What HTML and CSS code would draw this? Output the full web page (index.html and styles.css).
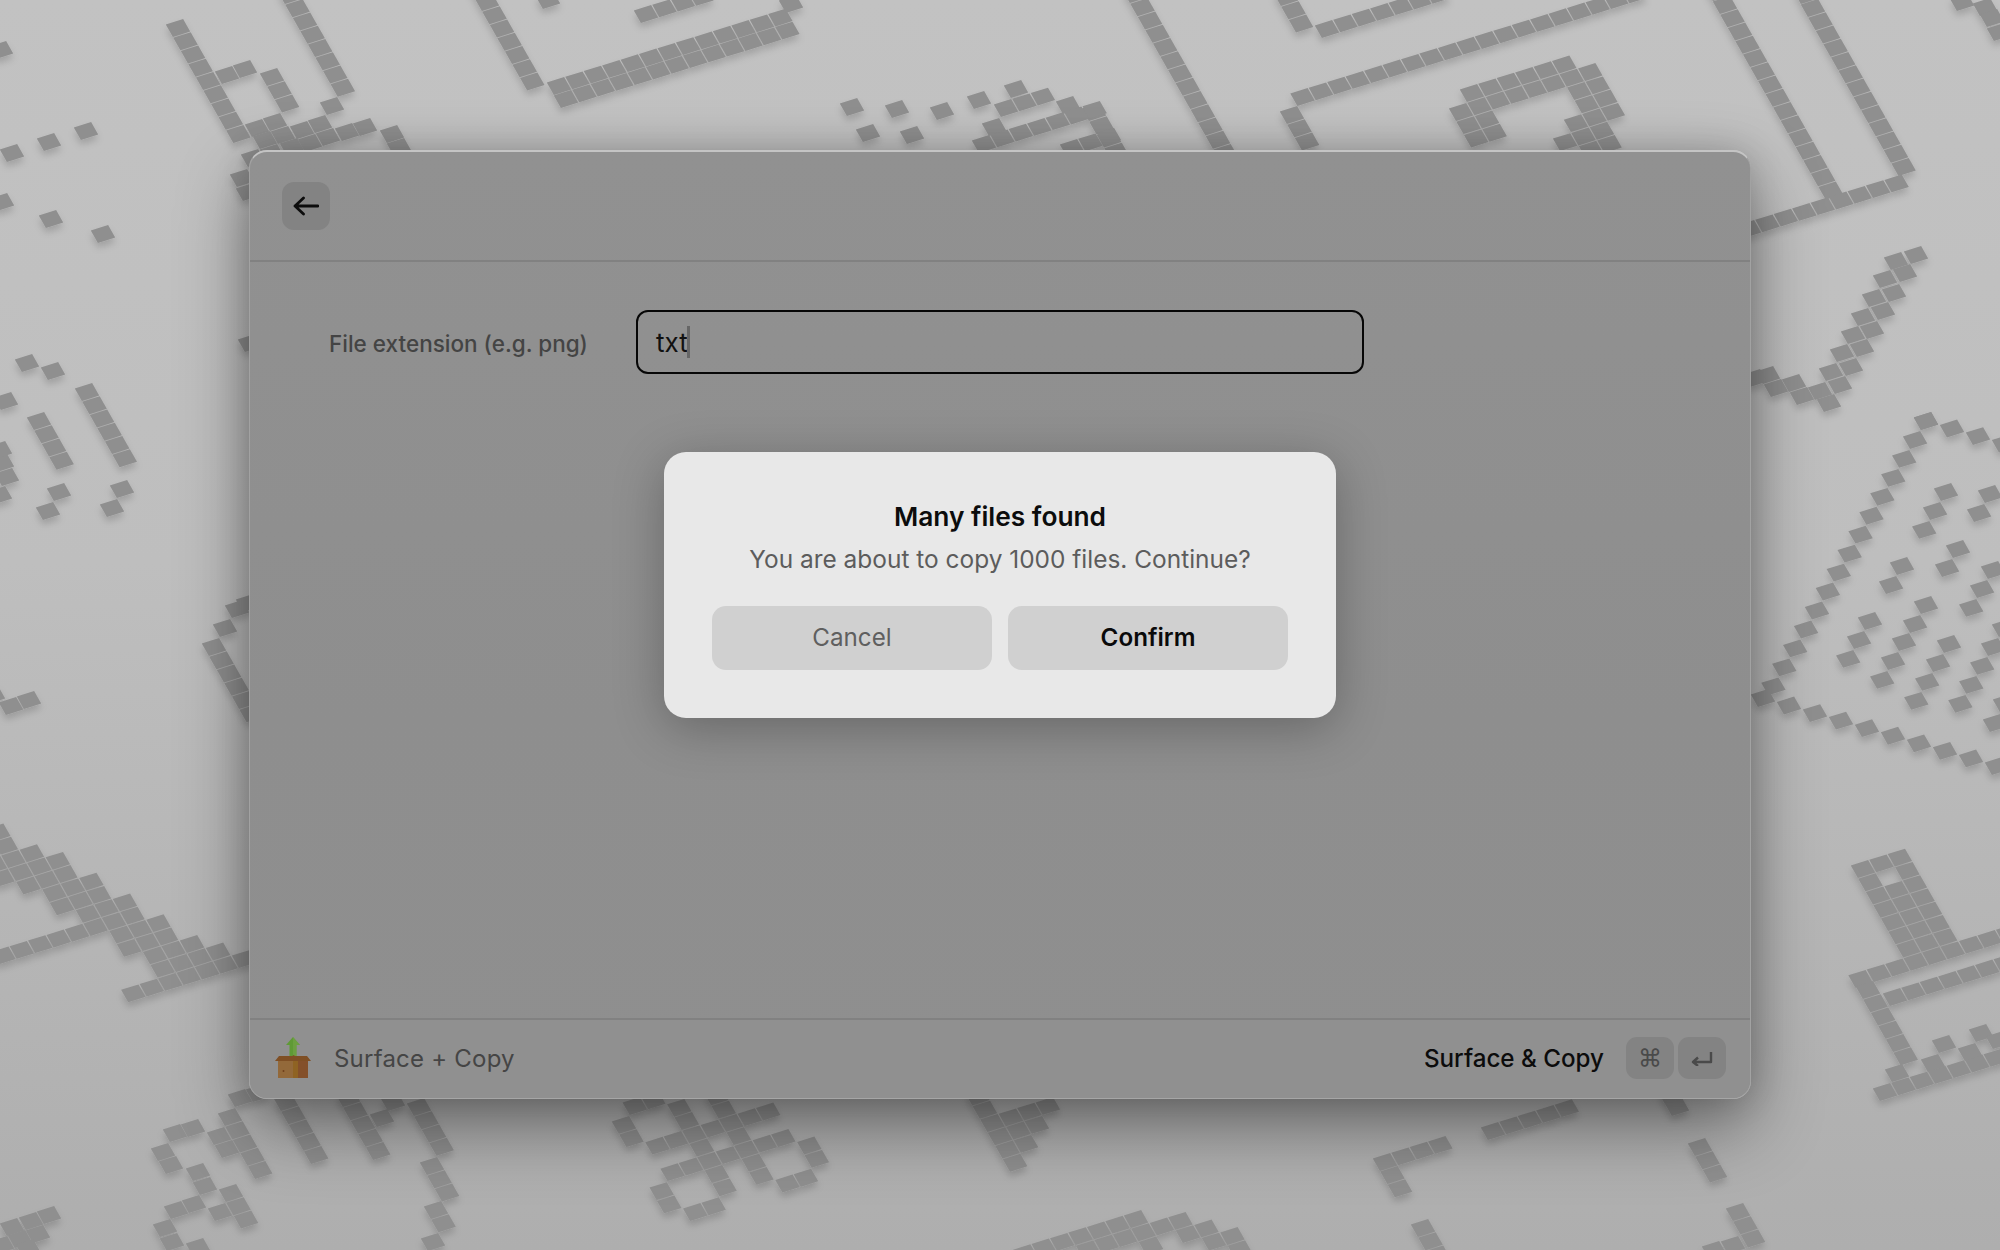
FILE: index.html
```html
<!DOCTYPE html>
<html lang="en">
<head>
<meta charset="utf-8">
<title>Surface + Copy</title>
<link rel="stylesheet" href="styles.css">
</head>
<body>
<div class="stage">
  <svg class="wallpaper" width="2000" height="1250" viewBox="0 0 2000 1250" aria-hidden="true">
    <defs>
      <filter id="lift" x="-5%" y="-5%" width="110%" height="110%">
        <feDropShadow dx="0" dy="5" stdDeviation="3.5" flood-color="#000" flood-opacity="0.16"/>
      </filter>
    </defs>
    <g id="cells" class="cells" filter="url(#lift)"></g>
  </svg>

  <main class="window">
    <header class="window-head">
      <button class="icon-btn" type="button" aria-label="Back">
        <svg width="26" height="20" viewBox="0 0 26 20" class="back-icon"><path d="M25 10H2M10.5 2 2 10l8.500 8"/></svg>
      </button>
    </header>

    <section class="form">
      <label class="form-label">File extension (e.g. png)</label>
      <div class="text-field"><span class="field-value">txt</span><span class="caret"></span></div>
    </section>

    <footer class="window-foot">
      <div class="foot-left">
        <svg class="app-icon" width="38" height="42" viewBox="0 0 38 42" aria-hidden="true">
          <path d="M19 0l7 8h-3.500v13h-7V8H12z" fill="#5f9a35"/>
          <path d="M22.500 8v13H19V0l7 8z" fill="#74a548" opacity=".6"/>
          <path d="M4 21h15v20H4z" fill="#93693a"/>
          <path d="M19 21h5v20h-5z" fill="#8f6323"/>
          <path d="M24 21h10v20H24z" fill="#84502a"/>
          <path d="M5 19h13.500l1 -1 1.500 1H33l4 5H1z" fill="#7f4f24"/>
          <circle cx="9.500" cy="34" r="1" fill="#6f3f1c"/>
        </svg>
        <span class="foot-title">Surface + Copy</span>
      </div>
      <div class="foot-right">
        <span class="foot-action">Surface &amp; Copy</span>
        <span class="keycap">⌘</span>
        <span class="keycap">
          <svg width="22" height="16" viewBox="0 0 22 16" class="return-icon"><path d="M20 2v10H2M7 7.500 2 12l5 4"/></svg>
        </span>
      </div>
    </footer>

    <div class="dialog" role="dialog">
      <h2 class="dialog-title">Many files found</h2>
      <p class="dialog-text">You are about to copy 1000 files. Continue?</p>
      <div class="dialog-actions">
        <button class="dialog-btn" type="button">Cancel</button>
        <button class="dialog-btn dialog-btn-primary" type="button">Confirm</button>
      </div>
    </div>
  </main>
</div>
<script src="wallpaper.js"></script>
</body>
</html>
```
FILE: styles.css
```css
* { box-sizing: border-box; }

html, body { margin: 0; padding: 0; }

body {
  font-family: Inter, "Liberation Sans", sans-serif;
  background: #bdbdbd;
}

.stage {
  position: relative;
  width: 2000px;
  height: 1250px;
  overflow: hidden;
  display: flex;
  justify-content: center;
  align-items: flex-start;
  padding-top: 150px;
  background: linear-gradient(180deg, #c2c2c2 0%, #bebebe 45%, #aeaeae 100%);
}

.wallpaper {
  position: absolute;
  left: 0;
  top: 0;
}

.cells polygon { fill: #8f8f8f; }

.window {
  position: relative;
  width: 1502px;
  height: 949px;
  display: flex;
  flex-direction: column;
  border-radius: 18px;
  background: linear-gradient(180deg, #919191 0%, #8e8e8e 60%, #8f8f8f 100%);
  border: 1px solid #a2a2a2;
  border-top: 2px solid #c4c4c4;
  border-bottom-color: #a6a6a6;
  box-shadow: 0 28px 70px rgba(0, 0, 0, .42), 0 0 34px rgba(0, 0, 0, .16);
}

.window-head {
  height: 110px;
  flex: none;
  padding: 30px 0 0 32px;
  border-bottom: 2px solid #818181;
}

.icon-btn {
  width: 48px;
  height: 48px;
  display: flex;
  align-items: center;
  justify-content: center;
  padding: 0;
  border: 0;
  border-radius: 12px;
  background: #838383;
}

.back-icon path {
  fill: none;
  stroke: #0c0c0c;
  stroke-width: 2.8;
  stroke-linecap: round;
  stroke-linejoin: round;
}

.form {
  flex: 1;
  display: flex;
  align-items: flex-start;
  padding: 48px 0 0 79px;
}

.form-label {
  width: 307px;
  flex: none;
  padding-top: 20px;
  font-size: 22.500px;
  line-height: 28px;
  font-weight: 500;
  color: #444;
}

.text-field {
  width: 728px;
  height: 64px;
  display: flex;
  align-items: center;
  padding-left: 18px;
  border: 2px solid #070707;
  border-radius: 12px;
  font-size: 26px;
  color: #111;
}

.caret {
  width: 3px;
  height: 32px;
  margin-left: -1px;
  background: #666;
}

.window-foot {
  height: 80px;
  flex: none;
  display: flex;
  align-items: center;
  justify-content: space-between;
  padding: 0 24px 1px 24px;
  border-top: 2px solid #818181;
  background: #909090;
  border-radius: 0 0 17px 17px;
}

.foot-left,
.foot-right {
  display: flex;
  align-items: center;
}

.app-icon { margin-right: 22px; margin-top: -1px; }

.foot-title {
  font-size: 24px;
  letter-spacing: .22px;
  color: #454545;
}

.foot-action {
  margin-right: 22px;
  font-size: 24.200px;
  font-weight: 500;
  color: #0c0c0c;
}

.keycap {
  width: 48px;
  height: 42px;
  display: flex;
  align-items: center;
  justify-content: center;
  margin-left: 4px;
  margin-bottom: 2px;
  border-radius: 11px;
  background: #838383;
  font-size: 24px;
  color: #4a4a4a;
}

.foot-action + .keycap { margin-left: 0; }

.return-icon path {
  fill: none;
  stroke: #4a4a4a;
  stroke-width: 2.4;
  stroke-linejoin: round;
}

.dialog {
  position: absolute;
  left: 414px;
  top: 300px;
  width: 672px;
  height: 266px;
  padding: 47px 48px 0;
  border-radius: 22px;
  background: #e8e8e8;
  text-align: center;
  box-shadow: 0 10px 50px rgba(0, 0, 0, .28);
}

.dialog-title {
  margin: 0;
  font-size: 26.300px;
  line-height: 36px;
  font-weight: 600;
  color: #0c0c0c;
}

.dialog-text {
  margin: 6px 0 0;
  font-size: 24.450px;
  line-height: 36px;
  color: #5c5c5c;
}

.dialog-actions {
  display: flex;
  gap: 16px;
  margin-top: 29px;
}

.dialog-btn {
  width: 280px;
  height: 64px;
  padding: 0 0 2px;
  border: 0;
  border-radius: 14px;
  background: #d0d0d0;
  font-family: inherit;
  font-size: 24.200px;
  color: #5f5f5f;
}

.dialog-btn-primary {
  font-weight: 600;
  color: #0a0a0a;
}
```
FILE: wallpaper.js
```js
// Pixel-art wallpaper on a skewed lattice.
const U = [18.45, -5.7], V = [7.55, 13.25];
const D = [V[0] - U[0], V[1] - U[1]], S = [V[0] + U[0], V[1] + U[1]];
const host = document.getElementById('cells');
const K = 0.47;

function cell(x, y) {
  const p = document.createElementNS('http://www.w3.org/2000/svg', 'polygon');
  const a = (sx, sy) => (x + sx * K * U[0] + sy * K * V[0]).toFixed(1) + ',' + (y + sx * K * U[1] + sy * K * V[1]).toFixed(1);
  p.setAttribute('points', [a(-1, -1), a(1, -1), a(1, 1), a(-1, 1)].join(' '));
  host.appendChild(p);
}
function run(x, y, dir, n) {
  for (let k = 0; k < n; k++) cell(x + dir[0] * k, y + dir[1] * k);
}
function dots(list) { list.forEach(p => cell(p[0], p[1])); }
function block(x, y, rows) {
  rows.forEach(([j, a, b]) => {
    for (let i = a; i <= b; i++) cell(x + i * U[0] + j * V[0], y + i * U[1] + j * V[1]);
  });
}

// top left
dots([[1,50],[12,153],[49,142],[86,131],[2,202],[51,219],[103,234]]);
run(178,28,V,9);
dots([[227,75],[245,69],[332,106],[392,134],[399,147],[242,178],[248,192],[253,158]]);
run(272,77,V,3);
run(290,-5,V,8);
dots([[257,128],[275,122],[302,130],[320,124],[347,132],[365,127],[265,140],[283,135],[310,143],[328,137],[272,153],[292,147]]);

// left middle
dots([[27,363],[53,371],[6,401],[2,463],[7,477],[0,495],[0,450],[59,492],[48,511],[122,489],[112,508],[250,343]]);
run(87,392,V,6);
run(39,421,V,4);
dots([[29,700],[11,706],[237,609],[248,603],[225,628],[-7,695]]);
run(214,647,V,6);

// large staircase, left
block(24.3,840,[[-1,-1,-1],[0,-1,-1],[1,-2,0],[2,-2,1],[3,-1,1],[4,0,2],[5,0,2],[6,1,3],[7,-4,3],[8,2,4],[9,2,4],[10,3,5],[11,3,6],[12,1,8]]);

// bottom left glyphs
dots([[240,1098],[258,1093],[175,1133],[193,1128],[163,1152],[171,1165],[219,1136],[227,1149],[198,1172],[205,1186],[176,1210],[194,1204],[220,1212],[165,1228],[172,1242],[198,1247]]);
run(230,1117,V,5);
run(231,1193,V,3);
dots([[49,1215],[31,1221],[12,1227],[38,1234],[20,1239],[2,1245],[28,1248]]);
run(286,1102,V,5);
run(348,1098,V,5);
dots([[382,1118],[393,1102]]);
run(419,1107,V,4);
run(432,1166,V,3);
run(436,1210,V,2);
run(433,1242,V,1);

// bottom centre
block(657.5,1145.7,[[-3,0,1],[-2,-1,-1],[-2,2,2],[-2,4,4],[-1,-1,-1],[-1,2,2],[-1,4,4],[0,0,6],[1,2,2],[1,4,4],[2,0,6],[3,-1,-1],[3,2,2],[3,4,4],[3,7,7],[4,-1,-1],[4,2,2],[4,4,4],[4,7,7],[5,0,1],[5,5,6]]);
block(992.5,1123,[[-2,0,0],[-1,0,0],[0,0,3],[1,0,2],[2,0,1],[3,0,0]]);
run(1493,1131,U,5);
run(1385,1162,U,4);
run(1392.500,1175,V,2);
run(1700,1147,V,3);
dots([[1677,1107],[1670,1095]]);
run(1738,1212,V,3);
dots([[1733,1245],[1714,1250]]);
run(1423,1228,V,3);
block(1136,1219,[[0,-6,0],[1,-3,2],[2,0,0],[2,2,3],[3,3,4],[4,4,4],[4,2,2]]);

// top centre
run(487,2,V,7);
run(480,-11,V,1);
run(559,86,U,13);
run(566,99,U,13);
dots([[791,4],[548,0]]);
run(646,14,U,4);
dots([[852,107],[897,109],[942,111],[979,100],[1016,89],[868,133],[912,135],[1068,105],[994,127]]);
run(1006,108,U,3);
run(1094,112,V,4);
run(984,144,U,7);
run(1072,148,U,3);
run(1135,-6,V,13);
run(1286,-3,V,3);
run(1327,29,U,7);
run(1302.500,97,U,19);
run(1292,115,V,3);
block(1472,93,[[0,0,5],[1,-1,6],[2,-1,0],[2,5,6],[3,-1,0],[3,5,6],[4,4,6],[5,3,5],[6,4,5]]);

// top right
run(1725,5,V,15);
run(1718,-8,V,1);
run(1813,8,V,13);
run(1806,-5,V,1);
run(1749,229,U,9);
dots([[1962,2],[1985,7],[1992,18],[1999,32]]);
dots([[1916,255],[1896,261],[1905,273],[1885,279],[1894,293],[1874,298],[1883,311],[1863,317],[1872,330],[1853,335],[1862,348],[1842,353],[1851,367],[1831,372],[1840,385],[1820,391],[1829,403],[1802,396],[1794,383],[1776,388],[1768,375],[1755,378]]);

// right diamond
run(1926,421,D,15);
run(1763,698,S,10);
run(1926,421,S,4);
run(1946,492,D,3);
run(1990,494,D,2);
run(1958,549,D,2);
run(1902,566,D,2);
run(1993,570,D,3);
run(1926,605,D,2);
run(1870,621,D,3);
run(2004,628,D,5);
run(1949,644,D,4);
run(1904,642,D,3);
dots([[1995,723],[2005,703]]);

// bottom right
block(1863,869,[[0,0,2],[1,0,0],[1,2,2],[2,0,2],[3,0,2],[4,0,2],[5,0,2],[6,0,2],[7,-3,6]]);
run(1868,990,V,6);
run(1895,997,U,7);
run(1885,1092,U,7);
dots([[1897,1073],[1933,1063],[1970,1052],[1944,1044],[1981,1033],[1998,1040]]);
```
